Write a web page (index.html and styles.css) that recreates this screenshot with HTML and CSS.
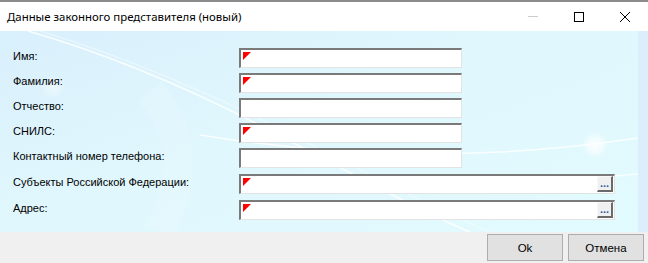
FILE: index.html
```html
<!DOCTYPE html>
<html lang="ru">

<head>
    <meta charset="UTF-8">
    <meta name="viewport" content="width=device-width, initial-scale=1.0">
    <title>Данные законного представителя (новый)</title>
    <link rel="stylesheet" href="styles.css">
</head>

<body>
    <div class="window">
        <div class="titlebar">
            <span class="title">Данные законного представителя (новый)</span>
            <div class="controls">
                <svg class="ctl" width="46" height="29" viewBox="0 0 46 29">
                    <line x1="18" y1="14.5" x2="28" y2="14.5" stroke="#cccccc" stroke-width="1" />
                </svg>
                <svg class="ctl" width="46" height="29" viewBox="0 0 46 29">
                    <rect x="18.5" y="10.5" width="9" height="9" fill="none" stroke="#000" stroke-width="1" />
                </svg>
                <svg class="ctl" width="46" height="29" viewBox="0 0 46 29">
                    <path d="M18 10 L28 20 M28 10 L18 20" stroke="#000" stroke-width="1" />
                </svg>
            </div>
        </div>

        <div class="body">
            <div class="panel">
                <!-- background swooshes -->
                <svg class="decor" width="638" height="201" viewBox="0 0 638 201">
                    <defs>
                        <radialGradient id="glow">
                            <stop offset="0" stop-color="#ffffff" stop-opacity="0.9" />
                            <stop offset="0.6" stop-color="#ffffff" stop-opacity="0.5" />
                            <stop offset="1" stop-color="#ffffff" stop-opacity="0" />
                        </radialGradient>
                    </defs>
                    <path d="M28 0 Q 150 35 290 110 T 470 201" fill="none" stroke="#ffffff" stroke-opacity="0.85" stroke-width="1.5" />
                    <path d="M40 0 Q 165 38 300 108 T 490 201" fill="none" stroke="#ffffff" stroke-opacity="0.5" stroke-width="1" />
                    <path d="M150 60 Q 200 120 160 201" fill="none" stroke="#ffffff" stroke-opacity="0.12" stroke-width="30" />
                    <path d="M200 104 Q 420 140 638 107" fill="none" stroke="#ffffff" stroke-opacity="0.85" stroke-width="1.5" />
                    <path d="M560 150 Q 600 146 638 143" fill="none" stroke="#ffffff" stroke-opacity="0.7" stroke-width="1.5" />
                    <circle cx="595" cy="114" r="13" fill="url(#glow)" />
                    <circle cx="53" cy="56" r="12" fill="url(#glow)" opacity="0.5" />
                </svg>

                <div class="form">
                    <label class="label">Имя:</label>
                    <div class="field required"></div>

                    <label class="label">Фамилия:</label>
                    <div class="field required"></div>

                    <label class="label">Отчество:</label>
                    <div class="field"></div>

                    <label class="label">СНИЛС:</label>
                    <div class="field required"></div>

                    <label class="label">Контактный номер телефона:</label>
                    <div class="field"></div>

                    <label class="label wide-row">Субъекты Российской Федерации:</label>
                    <div class="field wide wide-row required"><span class="pick">...</span></div>

                    <label class="label wide-row">Адрес:</label>
                    <div class="field wide wide-row required"><span class="pick">...</span></div>
                </div>
            </div>
            <div class="side-strip"></div>
        </div>

        <div class="footer">
            <button class="btn">Ok</button>
            <button class="btn">Отмена</button>
        </div>
    </div>
</body>

</html>
```

FILE: styles.css
```css
body,
html {
    margin: 0;
    padding: 0;
    background-color: white;
    width: 100%;
    height: 100%;
    overflow: hidden;
}

.window {
    display: flex;
    flex-direction: column;
    width: 648px;
    height: 263px;
    font-family: 'Liberation Sans', Arial, sans-serif;
}

.titlebar {
    display: flex;
    align-items: center;
    justify-content: space-between;
    height: 29px;
    border-top: 2px solid #8c8c8c;
    background-color: white;
}

.title {
    padding-left: 7px;
    font-family: 'Noto Sans', 'Liberation Sans', sans-serif;
    font-size: 11.4px;
    color: #000;
}

.controls {
    display: flex;
}

.ctl {
    display: block;
}

.body {
    display: flex;
    height: 201px;
}

.panel {
    position: relative;
    width: 638px;
    background: linear-gradient(160deg, #d9f0fd 0%, #e0f7fd 45%, #e2fbfe 100%);
    overflow: hidden;
}

.decor {
    position: absolute;
    top: 0;
    left: 0;
}

.side-strip {
    flex: 1;
    background-color: #dcedfb;
}

.form {
    position: relative;
    display: grid;
    grid-template-columns: 226px auto;
    row-gap: 5px;
    padding: 17px 0 0 13px;
    justify-items: start;
}

.label {
    font-size: 11px;
    line-height: 14px;
    padding-top: 1px;
    color: #000;
}

.wide-row {
    margin-top: 1px;
}

.field {
    position: relative;
    box-sizing: border-box;
    width: 223px;
    height: 20px;
    background-color: white;
    border-style: solid;
    border-width: 2px 1px 1px 2px;
    border-color: #7a7a7a #e3e3e3 #e3e3e3 #7a7a7a;
}

.field.wide {
    width: 376px;
}

.field.required::before {
    content: '';
    position: absolute;
    top: 2px;
    left: 2px;
    width: 0;
    height: 0;
    border-top: 8px solid #ff0000;
    border-right: 8px solid transparent;
}

.pick {
    position: absolute;
    top: 0;
    right: 1px;
    box-sizing: border-box;
    width: 16px;
    height: 16px;
    background-color: #f0f0f0;
    border-style: solid;
    border-width: 1px 2px 2px 1px;
    border-color: #f8f8f8 #6a6a6a #6a6a6a #f8f8f8;
    font-size: 11px;
    font-weight: bold;
    line-height: 13px;
    text-align: center;
    color: #2a5d9a;
}

.footer {
    display: flex;
    justify-content: flex-end;
    gap: 5px;
    flex: 1;
    padding: 2px 4px 0 0;
    background-color: #f0f0f0;
}

.btn {
    width: 76px;
    height: 27px;
    padding: 0;
    background-color: #e1e1e1;
    border: 1px solid #adadad;
    border-radius: 0;
    font-family: 'Liberation Sans', Arial, sans-serif;
    font-size: 11.5px;
    color: #000;
}
```
